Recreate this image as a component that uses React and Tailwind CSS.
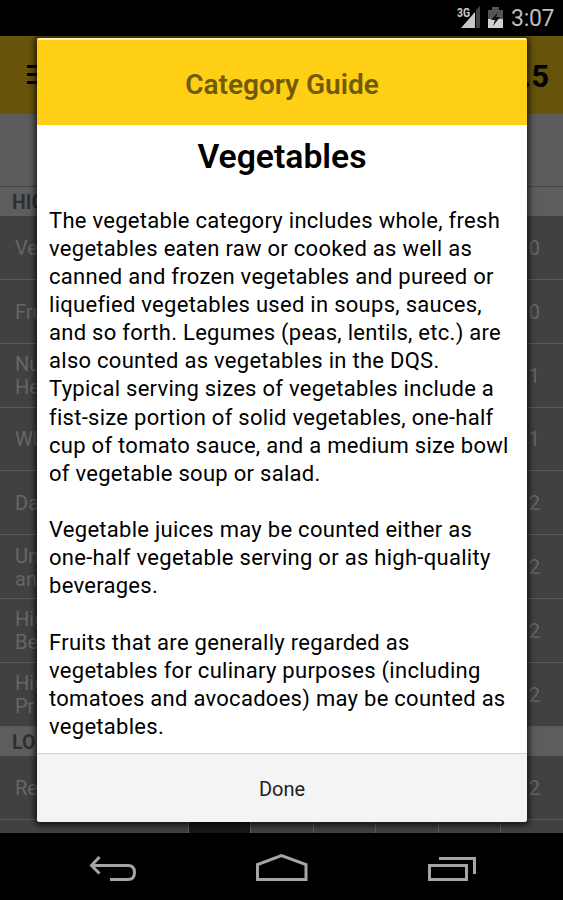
import React from 'react';

const rows = [
  { label: ['Veg'], value: '0' },
  { label: ['Fru'], value: '0' },
  { label: ['Nu', 'He'], value: '1' },
  { label: ['Wh'], value: '1' },
  { label: ['Da'], value: '2' },
  { label: ['Un', 'an'], value: '2' },
  { label: ['Hig', 'Be'], value: '2' },
  { label: ['Hig', 'Pr'], value: '2' },
];

const paragraphs = [
  [
    'The vegetable category includes whole, fresh',
    'vegetables eaten raw or cooked as well as',
    'canned and frozen vegetables and pureed or',
    'liquefied vegetables used in soups, sauces,',
    'and so forth. Legumes (peas, lentils, etc.) are',
    'also counted as vegetables in the DQS.',
    'Typical serving sizes of vegetables include a',
    'fist-size portion of solid vegetables, one-half',
    'cup of tomato sauce, and a medium size bowl',
    'of vegetable soup or salad.',
  ],
  [
    'Vegetable juices may be counted either as',
    'one-half vegetable serving or as high-quality',
    'beverages.',
  ],
  [
    'Fruits that are generally regarded as',
    'vegetables for culinary purposes (including',
    'tomatoes and avocadoes) may be counted as',
    'vegetables.',
  ],
];

const StatusBar = () => (
  <div className="flex h-9 shrink-0 items-center justify-end bg-black pr-[9px] text-[#bebebe]">
    <svg className="h-9 w-[50px]" viewBox="0 0 50 36">
      <path d="M23 6V28H19V10Z" fill="#444" />
      <path d="M4 28L18 12V28Z" fill="#c8c8c8" />
      <path d="M31 10H35V7H42V10H46V19H31Z" fill="#555" />
      <path d="M31 19H46V28H31Z" fill="#d0d0d0" />
      <path d="M41 12L34 20H38L36 26L43 17H39Z" fill="#111" />
      <text x="0" y="17" fontSize="12" fontWeight="700" fill="#ccc" textLength="13" lengthAdjust="spacingAndGlyphs">3G</text>
    </svg>
    <span className="ml-1 w-[43px] whitespace-nowrap pt-[2px] text-[23px] leading-[34px] tracking-[-0.3px]">3:07</span>
  </div>
);

const SectionHeader = ({ title }) => (
  <div className="flex h-[29px] shrink-0 items-center bg-[#5d5d60] pt-[2px] pl-3 text-[19.5px] font-bold text-[#303030]">
    {title}
  </div>
);

const FoodRow = ({ label, value }) => (
  <div className="flex h-[63.85px] shrink-0 items-center justify-between border-b border-[#5a5a5a] bg-[#414141] pt-[2px] pr-[23px] pl-[15px] text-[20px] leading-[23px] text-[#666]">
    <div>
      {label.map((line) => (
        <div key={line}>{line}</div>
      ))}
    </div>
    <div>{value}</div>
  </div>
);

const Screen = () => (
  <div className="flex h-[797px] flex-col overflow-hidden bg-[#414141]">
    <div className="flex h-[78px] shrink-0 items-center justify-between bg-[#67530a] pr-[14px] pl-[27px]">
      <div className="flex w-3 flex-col gap-[5px] pb-[2px]">
        <div className="h-[3px] bg-black" />
        <div className="h-[3px] bg-black" />
        <div className="h-[3px] bg-black" />
      </div>
      <span className="pt-1 text-[31px] font-bold text-black">.5</span>
    </div>
    <div className="h-[73px] shrink-0 border-b border-[#464646] bg-[#5c5c5f]" />
    <SectionHeader title="HIG" />
    {rows.map((row, index) => (
      <FoodRow key={index} {...row} />
    ))}
    <SectionHeader title="LO" />
    <FoodRow label={['Re']} value="2" />
    <div className="flex grow">
      <div className="w-[189px] border-r border-[#606060]" />
      <div className="w-[62px] border-r border-[#606060] bg-[#181818]" />
      <div className="w-[63px] border-r border-[#606060]" />
      <div className="w-[62px] border-r border-[#606060]" />
      <div className="w-[63px] border-r border-[#606060]" />
      <div className="w-[62px] border-r border-[#606060]" />
    </div>
  </div>
);

const GuideDialog = () => (
  <div className="absolute top-[38px] left-[37px] flex h-[784px] w-[490px] flex-col overflow-hidden rounded-[3px] bg-white shadow-[0_1px_6px_2px_rgba(0,0,0,0.75)]">
    <div className="flex h-[87px] shrink-0 items-center justify-center border-t-2 border-[#fff3c4] bg-[#ffcf16] pt-[5px] text-[28px] font-semibold text-[#705b0b]">
      Category Guide
    </div>
    <div className="flex grow flex-col px-3 text-black">
      <h1 className="pt-[9px] text-center text-[33.7px] leading-[46px] font-semibold">Vegetables</h1>
      <div className="flex flex-col gap-[28.1px] pt-[26.7px] text-[22px] leading-[28.13px] tracking-[0.28px]">
        {paragraphs.map((lines, index) => (
          <div key={index}>
            {lines.map((line) => (
              <div key={line} className="whitespace-nowrap">{line}</div>
            ))}
          </div>
        ))}
      </div>
    </div>
    <button className="h-[69px] shrink-0 border-t border-[#cfcfcf] bg-[#f4f4f4] pt-[2px] text-[20px] text-[#222]">
      Done
    </button>
  </div>
);

const NavBar = () => (
  <div className="h-[67px] bg-black">
    <svg className="h-[67px] w-[563px]" viewBox="0 833 563 67" fill="none" stroke="#a5a5a5" strokeWidth="3">
      <path d="M99.500 857L91.500 865.500L99.500 873.500M91.500 865.500H128Q134.500 865.500 134.500 872.500Q134.500 879.500 128 879.500H110" />
      <path d="M257.500 879.500V864.500L281.500 855.500L306 864.500V879.500Z" />
      <path d="M429.500 865.500H466.500V879.500H429.500Z" />
      <path d="M439 858.500H474.500V874" />
    </svg>
  </div>
);

export default function App() {
  return (
    <div className="relative h-[900px] w-[563px] overflow-hidden bg-black font-[Roboto,sans-serif]">
      <StatusBar />
      <Screen />
      <NavBar />
      <GuideDialog />
    </div>
  );
}
